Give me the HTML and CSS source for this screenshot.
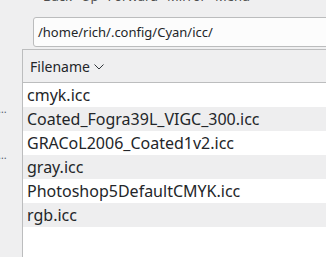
FILE: index.html
```html
<!DOCTYPE html>
<html lang="en">
<head>
  <meta charset="UTF-8" />
  <title>Select profile</title>
  <link rel="stylesheet" href="styles.css">
</head>
<body>
  <div class="toolbar">
    <span class="tool">Back</span>
    <span class="tool">Up</span>
    <span class="tool">Forward</span>
    <span class="tool">Mirror</span>
    <span class="tool">Menu</span>
  </div>
  <div class="main">
    <div class="sidebar">
      <span class="place">…</span>
      <span class="place">…</span>
    </div>
    <div class="content">
      <div class="address">
        <div class="field">/home/rich/.config/Cyan/icc/</div>
      </div>
      <div class="list">
        <div class="header">
          <span>Filename</span>
          <svg class="chevron" width="10" height="6" viewBox="0 0 10 6">
            <path d="M0.5 0.5 L5 5 L9.5 0.5" fill="none" stroke="#31363b" stroke-width="1" />
          </svg>
        </div>
        <div class="row">cmyk.icc</div>
        <div class="row">Coated_Fogra39L_VIGC_300.icc</div>
        <div class="row">GRACoL2006_Coated1v2.icc</div>
        <div class="row">gray.icc</div>
        <div class="row">Photoshop5DefaultCMYK.icc</div>
        <div class="row">rgb.icc</div>
      </div>
    </div>
  </div>
</body>
</html>
```

FILE: styles.css
```css
* {
  box-sizing: border-box;
  margin: 0;
  padding: 0;
}

html, body {
  height: 100%;
  overflow: hidden;
}

body {
  background: #efeff0;
  color: #232629;
  font-family: "Noto Sans", sans-serif;
}

.toolbar {
  height: 17px;
  display: flex;
  gap: 9px;
  padding-left: 43px;
  overflow: hidden;
  font-size: 13px;
  line-height: 14px;
  color: #4d4d4d;
}

.tool {
  margin-top: -11px;
}

.main {
  display: flex;
  height: 240px;
}

.sidebar {
  width: 22px;
  display: flex;
  flex-direction: column;
  padding-top: 86px;
  gap: 34px;
  font-size: 11px;
  line-height: 12px;
  color: #5a6470;
  overflow: hidden;
}

.place {
  margin-left: -2px;
}

.content {
  flex: 1;
  display: flex;
  flex-direction: column;
}

.address {
  padding-left: 11px;
}

.field {
  height: 30px;
  margin-right: -10px;
  background: #fcfcfc;
  border: 1px solid #bbbcbd;
  border-radius: 3px;
  padding-left: 4px;
  font-size: 13px;
  line-height: 28px;
}

.list {
  flex: 1;
  margin-top: 2px;
  margin-right: -10px;
  background: #ffffff;
  border-top: 1px solid #bcbdbe;
  border-left: 1px solid #bcbdbe;
}

.header {
  height: 33px;
  display: flex;
  align-items: center;
  gap: 4px;
  padding-left: 7px;
  background: #efeff0;
  border-bottom: 1px solid #bcbdbe;
  font-size: 14px;
}

.chevron {
  margin-top: 1px;
}

.row {
  height: 24px;
  padding-left: 4px;
  font-size: 16px;
  line-height: 24px;
}

.row:nth-child(odd) {
  background: #eeeeef;
}
```
